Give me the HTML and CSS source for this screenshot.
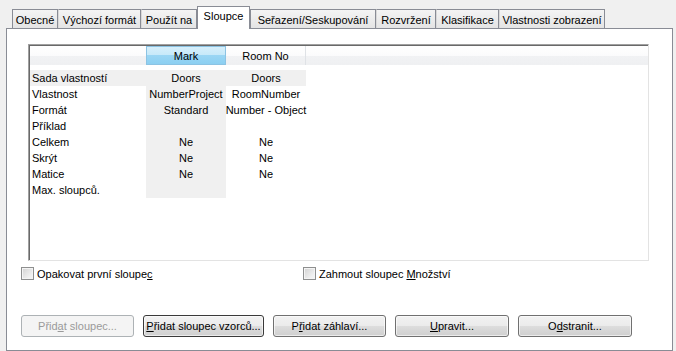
FILE: index.html
```html
<!DOCTYPE html>
<html lang="cs">
<head>
<meta charset="utf-8">
<title>Sloupce</title>
<link rel="stylesheet" href="styles.css">
</head>
<body>
<div class="tabs">
  <div class="tab t1">Obecné</div>
  <div class="tab t2">Výchozí formát</div>
  <div class="tab t3">Použít na</div>
  <div class="tab t4 active">Sloupce</div>
  <div class="tab t5">Seřazení/Seskupování</div>
  <div class="tab t6">Rozvržení</div>
  <div class="tab t7">Klasifikace</div>
  <div class="tab t8">Vlastnosti zobrazení</div>
</div>
<div class="panel">
  <div class="grid">
    <div class="grid-in">
      <div class="head">
        <div class="hc"></div>
        <div class="hc sel">Mark</div>
        <div class="hc sep">Room No</div>
        <div class="hc"></div>
      </div>
      <div class="rows">
        <div class="c l g">Sada vlastností</div><div class="c g">Doors</div><div class="c g">Doors</div><div class="c"></div>
        <div class="c l">Vlastnost</div><div class="c g">NumberProject</div><div class="c">RoomNumber</div><div class="c"></div>
        <div class="c l">Formát</div><div class="c g">Standard</div><div class="c">Number - Object</div><div class="c"></div>
        <div class="c l">Příklad</div><div class="c g"></div><div class="c"></div><div class="c"></div>
        <div class="c l">Celkem</div><div class="c g">Ne</div><div class="c">Ne</div><div class="c"></div>
        <div class="c l">Skrýt</div><div class="c g">Ne</div><div class="c">Ne</div><div class="c"></div>
        <div class="c l">Matice</div><div class="c g">Ne</div><div class="c">Ne</div><div class="c"></div>
        <div class="c l">Max. sloupců.</div><div class="c g"></div><div class="c"></div><div class="c"></div>
      </div>
    </div>
  </div>
  <div class="checks">
    <label class="chk first"><span class="box"></span><span class="lbl">Opakovat první sloupe<u>c</u></span></label>
    <label class="chk"><span class="box"></span><span class="lbl">Zahmout sloupec <u>M</u>nožství</span></label>
  </div>
  <div class="buttons">
    <div class="btn disabled"><span>Přid<u>a</u>t sloupec...</span></div>
    <div class="btn focus"><span><u>P</u>řidat sloupec vzorců...</span></div>
    <div class="btn"><span>P<u>ř</u>idat záhlaví...</span></div>
    <div class="btn"><span><u>U</u>pravit...</span></div>
    <div class="btn"><span>O<u>d</u>stranit...</span></div>
  </div>
</div>
</body>
</html>
```
FILE: styles.css
```css
html, body {
  margin: 0;
  padding: 0;
  background: #f0f0f0;
  font-family: "Liberation Sans", Arial, sans-serif;
  font-size: 11px;
  color: #000;
}

.tabs {
  display: flex;
  align-items: flex-end;
  height: 22px;
  margin-top: 6px;
  padding-left: 12px;
}

.tab {
  box-sizing: border-box;
  height: 19px;
  border: 1px solid #898c95;
  border-bottom: none;
  background: linear-gradient(#f4f4f4, #e4e4e4);
  display: flex;
  align-items: center;
  justify-content: center;
  padding-top: 1px;
  white-space: nowrap;
}
.tab + .tab { border-left-color: #d8d8d8; }
.t1 { width: 46px; }
.t2 { width: 83px; }
.t3 { width: 56px; }
.t4 { width: 53px; }
.t5 { width: 126px; }
.t6 { width: 60px; }
.t7 { width: 63px; }
.t8 { width: 106px; }

.tab.active {
  height: 23px;
  margin-bottom: -1px;
  background: #fff;
  border-color: #898c95;
  position: relative;
  z-index: 1;
  padding-top: 0;
  padding-bottom: 4px;
}
.tab.active + .tab { border-left-color: #898c95; }

.panel {
  box-sizing: border-box;
  width: 667px;
  height: 323px;
  margin-left: 6px;
  border: 1px solid #898c95;
  background: #fff;
  padding: 15px 0 0 14px;
}

.grid {
  box-sizing: border-box;
  width: 621px;
  height: 217px;
  margin-left: 7px;
  border: 1px solid;
  border-color: #a0a0a0 #e3e3e3 #e3e3e3 #a0a0a0;
}
.grid-in {
  box-sizing: border-box;
  height: 100%;
  border-top: 1px solid #696969;
  border-left: 1px solid #696969;
}

.head {
  display: grid;
  grid-template-columns: 116px 80px 80px 1fr;
  height: 19px;
  background: linear-gradient(#ffffff 0%, #fbfbfc 50%, #f1f2f4 50%, #eff0f2 100%);
}
.hc {
  display: flex;
  align-items: center;
  justify-content: center;
}
.hc.sel {
  box-sizing: border-box;
  border: 1px solid #8cc3e3;
  background: linear-gradient(#d6effb 0%, #c6e9f9 50%, #9ad6f4 50%, #8ccff1 100%);
}
.hc.sep { border-right: 1px solid #dfe2e6; }

.rows {
  display: grid;
  grid-template-columns: 116px 80px 80px 1fr;
  grid-auto-rows: 16px;
  margin-top: 5px;
}
.c {
  display: flex;
  align-items: center;
  justify-content: center;
  white-space: nowrap;
}
.c.l {
  justify-content: flex-start;
  padding-left: 2px;
}
.c.g { background: #f0f0f0; }

.checks {
  display: flex;
  margin-top: 6px;
  height: 13px;
}
.chk {
  display: flex;
  align-items: center;
  gap: 3px;
  white-space: nowrap;
}
.chk.first { width: 282px; }
.box {
  box-sizing: border-box;
  width: 13px;
  height: 13px;
  border: 1px solid #8e8f8f;
  background: linear-gradient(135deg, #d2d2d2, #efefef 70%, #f6f6f6);
  box-shadow: inset 0 0 0 1px #f4f4f4;
}

.buttons {
  display: grid;
  grid-template-columns: 113px 121px 113px 114px 114px;
  column-gap: 9px;
  margin-top: 35px;
}
.btn {
  box-sizing: border-box;
  height: 22px;
  border: 1px solid #707070;
  border-radius: 3px;
  background: linear-gradient(#f2f2f2 0%, #ebebeb 50%, #dddddd 50%, #cfcfcf 100%);
  box-shadow: inset 0 0 0 1px rgba(255,255,255,0.6);
  display: flex;
  align-items: center;
  justify-content: center;
  white-space: nowrap;
}
.btn.disabled {
  border-color: #adb2b5;
  background: #f4f4f4;
  box-shadow: none;
  color: #9a9a9a;
}
.btn.focus {
  border-color: #3a3a3a;
}
```
